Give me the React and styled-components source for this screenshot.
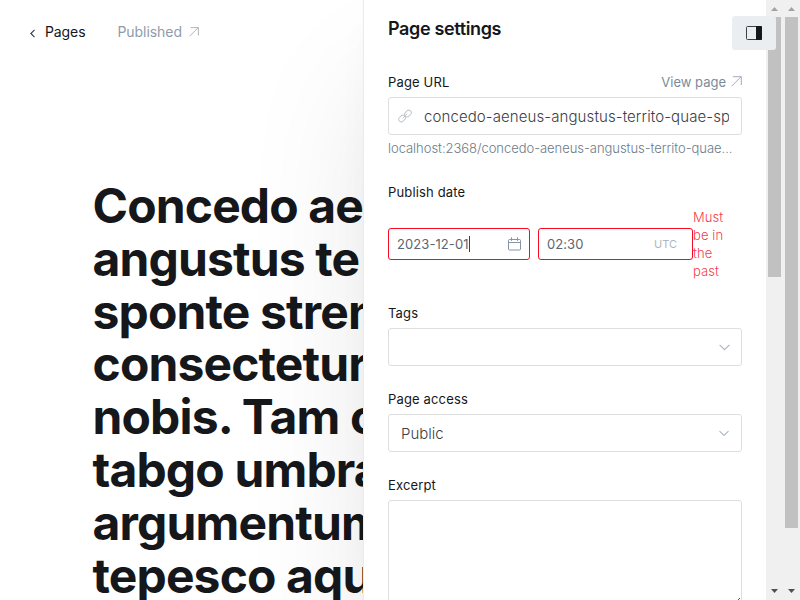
import React from "react";
import styled, { createGlobalStyle } from "styled-components";

const GlobalStyle = createGlobalStyle`
  *, *::before, *::after { box-sizing: border-box; }
  html, body { margin: 0; height: 100%; overflow: hidden; background: #fff; }
  body { font-family: Inter, "Liberation Sans", sans-serif; color: #15171a; }
`;

const Screen = styled.div`
  display: grid;
  grid-template-columns: 363px 403px 17px 17px;
  width: 800px;
  height: 600px;
  overflow: hidden;
  position: relative;
`;

const Editor = styled.main`
  min-width: 0;
  overflow: hidden;
`;

const EditorNav = styled.header`
  display: flex;
  align-items: center;
  height: 34px;
  margin-top: 15px;
  padding-left: 29px;
  font-size: 14px;
  line-height: 20px;
`;

const BackLink = styled.a`
  display: flex;
  align-items: center;
  gap: 9px;
  color: #394047;
  svg { margin-top: 3px; }
  span { color: #15171a; letter-spacing: -0.1px; }
`;

const Status = styled.a`
  display: flex;
  align-items: center;
  gap: 7px;
  margin-left: 32px;
  color: #8e9cac;
  letter-spacing: -0.05px;
`;

const PostTitle = styled.h1`
  margin: 131px 0 0 92.5px;
  font-size: 48px;
  line-height: 52.8px;
  font-weight: 700;
  letter-spacing: -0.86px;
  white-space: nowrap;
`;

const TitleLine = styled.span`
  display: block;
`;

const Panel = styled.aside`
  position: relative;
  z-index: 1;
  background: #fff;
  border-left: 1px solid #ececec;
  padding: 0 24px;
  height: 600px;
  box-shadow:
    0 0 1px rgba(0, 0, 0, 0.05),
    0 5.9px 6.5px -7px rgba(0, 0, 0, 0.02),
    0 17.8px 40px -7px rgba(0, 0, 0, 0.03),
    0 80px 130px -7px rgba(0, 0, 0, 0.1);
`;

const PanelTitle = styled.h4`
  margin: 17px 0 0;
  font-size: 18px;
  line-height: 24px;
  font-weight: 600;
  letter-spacing: -0.36px;
`;

const Field = styled.div`
  display: flex;
  flex-direction: column;
  margin-top: ${(p) => p.$gap || 23}px;
`;

const LabelRow = styled.div`
  display: flex;
  justify-content: space-between;
  align-items: center;
  height: 20px;
  margin-bottom: 5px;
  font-size: 13px;
`;

const Label = styled.label`
  font-weight: 400;
  letter-spacing: 0.15px;
`;

const ViewLink = styled.a`
  display: flex;
  align-items: center;
  gap: 5px;
  margin-top: -1px;
  color: #7c8b9a;
`;

const InputBox = styled.div`
  display: flex;
  align-items: center;
  justify-content: space-between;
  height: 38px;
  border: 1px solid #dddedf;
  border-radius: 3px;
  padding: 0 ${(p) => p.$right || 12}px 0 12px;
  color: #394047;
  font-size: 15px;
  font-weight: 300;
`;

const UrlBox = styled(InputBox)`
  justify-content: flex-start;
  padding: 0 12px 0 9px;
  gap: 12px;
  svg { flex: none; }
`;

const UrlText = styled.span`
  overflow: hidden;
  white-space: nowrap;
  line-height: 24px;
  padding-top: 1px;
  letter-spacing: 0.1px;
`;

const Help = styled.p`
  margin: 3px 0 1px;
  font-size: 13px;
  line-height: 20px;
  color: #6c7b89;
  font-weight: 300;
  letter-spacing: -0.04px;
  white-space: nowrap;
`;

const DateRow = styled.div`
  display: flex;
  align-items: center;
  margin-top: 1px;
`;

const DateBox = styled(InputBox)`
  width: ${(p) => p.$width}px;
  height: 32px;
  flex: none;
  padding: 0 8px;
  margin-right: ${(p) => p.$after || 0}px;
  border-color: #f50b23;
  font-size: 13px;
  color: #5b6672;
  font-weight: 400;
`;

const DateText = styled.span`
  display: flex;
  align-items: center;
  letter-spacing: 0.08px;
`;

const Caret = styled.i`
  width: 1px;
  height: 16px;
  background: #394047;
`;

const Zone = styled.small`
  font-size: 11px;
  color: #aeb7c1;
  margin-right: 7px;
`;

const ErrorText = styled.p`
  margin: 0;
  width: 40px;
  font-size: 13px;
  line-height: 18px;
  font-weight: 300;
  letter-spacing: 0.1px;
  color: rgba(245, 11, 35, 0.85);
`;

const ExcerptArea = styled(InputBox)`
  height: 112px;
  align-items: flex-end;
  justify-content: flex-end;
  padding: 0 1px 5px;
`;

const SettingsToggle = styled.button`
  position: absolute;
  z-index: 3;
  left: 732px;
  top: 16px;
  width: 44px;
  height: 34px;
  padding: 0;
  border: 0;
  border-radius: 3px;
  background: #ebeef0;
  display: flex;
  align-items: center;
  justify-content: center;
`;

const ScrollTrack = styled.div`
  position: relative;
  z-index: 2;
  display: flex;
  flex-direction: column;
  align-items: center;
  background: #f0f0f0;
`;

const ScrollThumb = styled.div`
  width: 13px;
  height: ${(p) => p.$size}px;
  background: #c1c1c1;
`;

const ScrollButton = styled.div`
  display: flex;
  align-items: center;
  justify-content: center;
  width: 17px;
  height: 17px;
  margin-top: ${(p) => (p.$bottom ? "auto" : 0)};
  padding-bottom: ${(p) => (p.$bottom ? "1px" : 0)};
`;

function ArrowOut({ size = 11 }) {
  return (
    <svg width={size} height={size} viewBox="0 0 11 11" fill="none" stroke="#a2adb8">
      <path d="M.6 10.2 10.1.7M1.8.7h8.5v8.5" />
    </svg>
  );
}

function Chevron({ width = 11 }) {
  return (
    <svg width={width} height="7" viewBox="0 0 11 7" fill="none" stroke="#aeb7c1" strokeWidth="1.2">
      <path d="m.6.8 4.9 4.9L10.4.8" />
    </svg>
  );
}

function LinkIcon() {
  return (
    <svg width="14" height="14" viewBox="0 0 24 24" fill="none" stroke="#c3c7cb" strokeWidth="1.7" strokeLinecap="round" strokeLinejoin="round">
      <path d="m8.5 15.5 7-7" />
      <rect x="10.7" y="3.5" width="12.5" height="8.6" rx="4.3" transform="rotate(-45 16.95 7.8)" />
      <rect x=".8" y="11.9" width="12.5" height="8.6" rx="4.3" transform="rotate(-45 7.05 16.2)" />
    </svg>
  );
}

function CalendarIcon() {
  return (
    <svg width="13" height="14" viewBox="0 0 13 14" fill="none" stroke="#8694a3">
      <rect x=".5" y="2.5" width="12" height="10.5" rx="1" />
      <path d="M.5 5.5h12M3.5.3v3.6M9.5.3v3.6" />
    </svg>
  );
}

function Scrollbar({ size }) {
  return (
    <ScrollTrack>
      <ScrollButton>
        <svg width="7" height="4" viewBox="0 0 7 4"><path d="M0 4 3.5 0 7 4z" fill="#a3a3a3" /></svg>
      </ScrollButton>
      <ScrollThumb $size={size} />
      <ScrollButton $bottom>
        <svg width="7" height="4" viewBox="0 0 7 4"><path d="M0 0h7L3.5 4z" fill="#505050" /></svg>
      </ScrollButton>
    </ScrollTrack>
  );
}

const TITLE = [
  "Concedo ae",
  "angustus te",
  "sponte stren",
  "consectetur",
  "nobis. Tam c",
  "tabgo umbra",
  "argumentum",
  "tepesco aqu",
];

export default function App() {
  return (
    <>
      <GlobalStyle />
      <Screen>
        <Editor>
          <EditorNav>
            <BackLink>
              <svg width="7" height="9" viewBox="0 0 7 9" fill="none" stroke="#394047" strokeWidth="1.2">
                <path d="M5.5.9 1.9 4.5l3.6 3.6" />
              </svg>
              <span>Pages</span>
            </BackLink>
            <Status>
              Published <ArrowOut size={10} />
            </Status>
          </EditorNav>
          <PostTitle>
            {TITLE.map((line) => (
              <TitleLine key={line}>{line}</TitleLine>
            ))}
          </PostTitle>
        </Editor>

        <Panel>
          <PanelTitle>Page settings</PanelTitle>
          <Field $gap={31}>
            <LabelRow>
              <Label>Page URL</Label>
              <ViewLink>
                View page <ArrowOut />
              </ViewLink>
            </LabelRow>
            <UrlBox>
              <LinkIcon />
              <UrlText>concedo-aeneus-angustus-territo-quae-sponte</UrlText>
            </UrlBox>
            <Help>localhost:2368/concedo-aeneus-angustus-territo-quae...</Help>
          </Field>
          <Field>
            <LabelRow>
              <Label>Publish date</Label>
            </LabelRow>
            <DateRow>
              <DateBox $width={142} $after={8}>
                <DateText>
                  2023-12-01
                  <Caret />
                </DateText>
                <CalendarIcon />
              </DateBox>
              <DateBox $width={155}>
                <DateText>02:30</DateText>
                <Zone>UTC</Zone>
              </DateBox>
              <ErrorText>Must be in the past</ErrorText>
            </DateRow>
          </Field>
          <Field>
            <LabelRow>
              <Label>Tags</Label>
            </LabelRow>
            <InputBox $right={11}>
              <span />
              <Chevron />
            </InputBox>
          </Field>
          <Field>
            <LabelRow>
              <Label>Page access</Label>
            </LabelRow>
            <InputBox>
              Public
              <Chevron width={10} />
            </InputBox>
          </Field>
          <Field>
            <LabelRow>
              <Label>Excerpt</Label>
            </LabelRow>
            <ExcerptArea>
              <svg width="8" height="8" viewBox="0 0 8 8" stroke="#505050">
                <path d="M0 8 8 0M4 8l4-4" />
              </svg>
            </ExcerptArea>
          </Field>
        </Panel>
        <Scrollbar size={260} />
        <Scrollbar size={511} />
        <SettingsToggle aria-label="Settings">
          <svg width="16" height="14" viewBox="0 0 16 14">
            <rect x=".5" y=".5" width="15" height="13" rx="1" fill="none" stroke="#394047" />
            <path d="M10 0h5a1 1 0 0 1 1 1v12a1 1 0 0 1-1 1h-5z" fill="#15171a" />
          </svg>
        </SettingsToggle>
      </Screen>
    </>
  );
}
